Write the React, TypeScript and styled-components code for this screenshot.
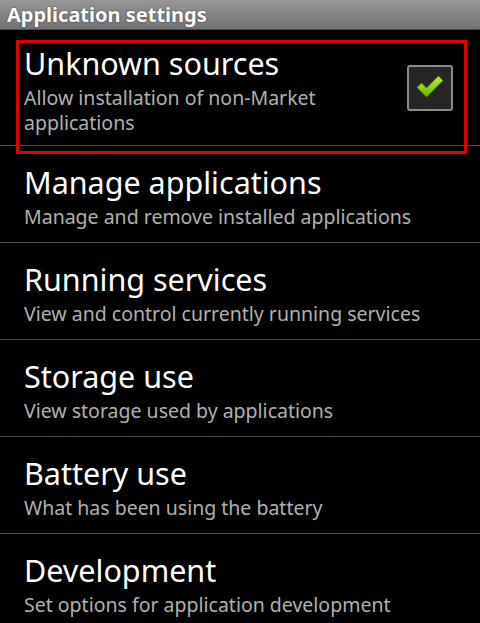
import React from "react";
import styled, { createGlobalStyle } from "styled-components";

const GlobalStyle = createGlobalStyle`
  html, body {
    margin: 0;
    padding: 0;
    background: #000;
  }
  body {
    font-family: "Noto Sans", "Open Sans", "DejaVu Sans", sans-serif;
  }
`;

const Screen = styled.div`
  width: 480px;
  height: 623px;
  overflow: hidden;
  background: #000;
  position: relative;
`;

const Header = styled.div`
  height: 30px;
  box-sizing: border-box;
  padding: 0 0 0 7px;
  display: flex;
  align-items: center;
  background: linear-gradient(#979797, #727272);
  border-bottom: 1px solid #4a4a4a;
  color: #fff;
  font-size: 20px;
  font-weight: bold;
  text-shadow: 0 0 2px rgba(0, 0, 0, 0.6);
`;

const List = styled.div`
  display: flex;
  flex-direction: column;
`;

const Row = styled.div<{ $tall?: boolean }>`
  height: ${p => (p.$tall ? "116px" : "97px")};
  box-sizing: border-box;
  display: flex;
  align-items: center;
  padding: 4px 27px 0 24px;
  border-bottom: 1px solid #4a4a4a;
  flex-shrink: 0;
`;

const Texts = styled.div`
  flex: 1;
  display: flex;
  flex-direction: column;
`;

const Title = styled.div`
  color: #fff;
  font-size: 30.5px;
  line-height: 38px;
`;

const Summary = styled.div`
  color: #b0b0b0;
  font-size: 19.5px;
  line-height: 24.5px;
  margin-top: 4px;
`;

const CheckBox = styled.div`
  width: 46px;
  height: 46px;
  margin-top: -3px;
  box-sizing: border-box;
  border: 2px solid #8a8a8a;
  border-radius: 3px;
  background: #262626;
  display: flex;
  align-items: center;
  justify-content: center;
`;

const Highlight = styled.div`
  position: absolute;
  left: 16px;
  top: 40px;
  width: 451px;
  height: 114px;
  box-sizing: border-box;
  border: 3px solid #e00000;
  pointer-events: none;
`;

const items = [
  { title: "Manage applications", summary: "Manage and remove installed applications" },
  { title: "Running services", summary: "View and control currently running services" },
  { title: "Storage use", summary: "View storage used by applications" },
  { title: "Battery use", summary: "What has been using the battery" },
  { title: "Development", summary: "Set options for application development" },
];

const Check = () => (
  <svg width="30" height="24" viewBox="0 0 30 24" style={{ marginTop: -2 }}>
    <defs>
      <linearGradient id="chk" x1="0" y1="0" x2="0" y2="1">
        <stop offset="0" stopColor="#b8f030" />
        <stop offset="1" stopColor="#6ab800" />
      </linearGradient>
    </defs>
    <path
      d="M2 12.5 L6.5 8 L11.5 13 L23.5 1 L28 5.5 L11.5 22 Z"
      fill="url(#chk)"
      stroke="#4d8a00"
      strokeWidth="0.6"
      strokeLinejoin="round"
    />
  </svg>
);

const App: React.FC = () => {
  return (
    <Screen>
      <GlobalStyle />
      <Header>Application settings</Header>
      <List>
        <Row $tall>
          <Texts>
            <Title>Unknown sources</Title>
            <Summary>
              Allow installation of non-Market
              <br />
              applications
            </Summary>
          </Texts>
          <CheckBox>
            <Check />
          </CheckBox>
        </Row>
        {items.map(item => (
          <Row key={item.title}>
            <Texts>
              <Title>{item.title}</Title>
              <Summary>{item.summary}</Summary>
            </Texts>
          </Row>
        ))}
      </List>
      <Highlight />
    </Screen>
  );
};

export default App;
